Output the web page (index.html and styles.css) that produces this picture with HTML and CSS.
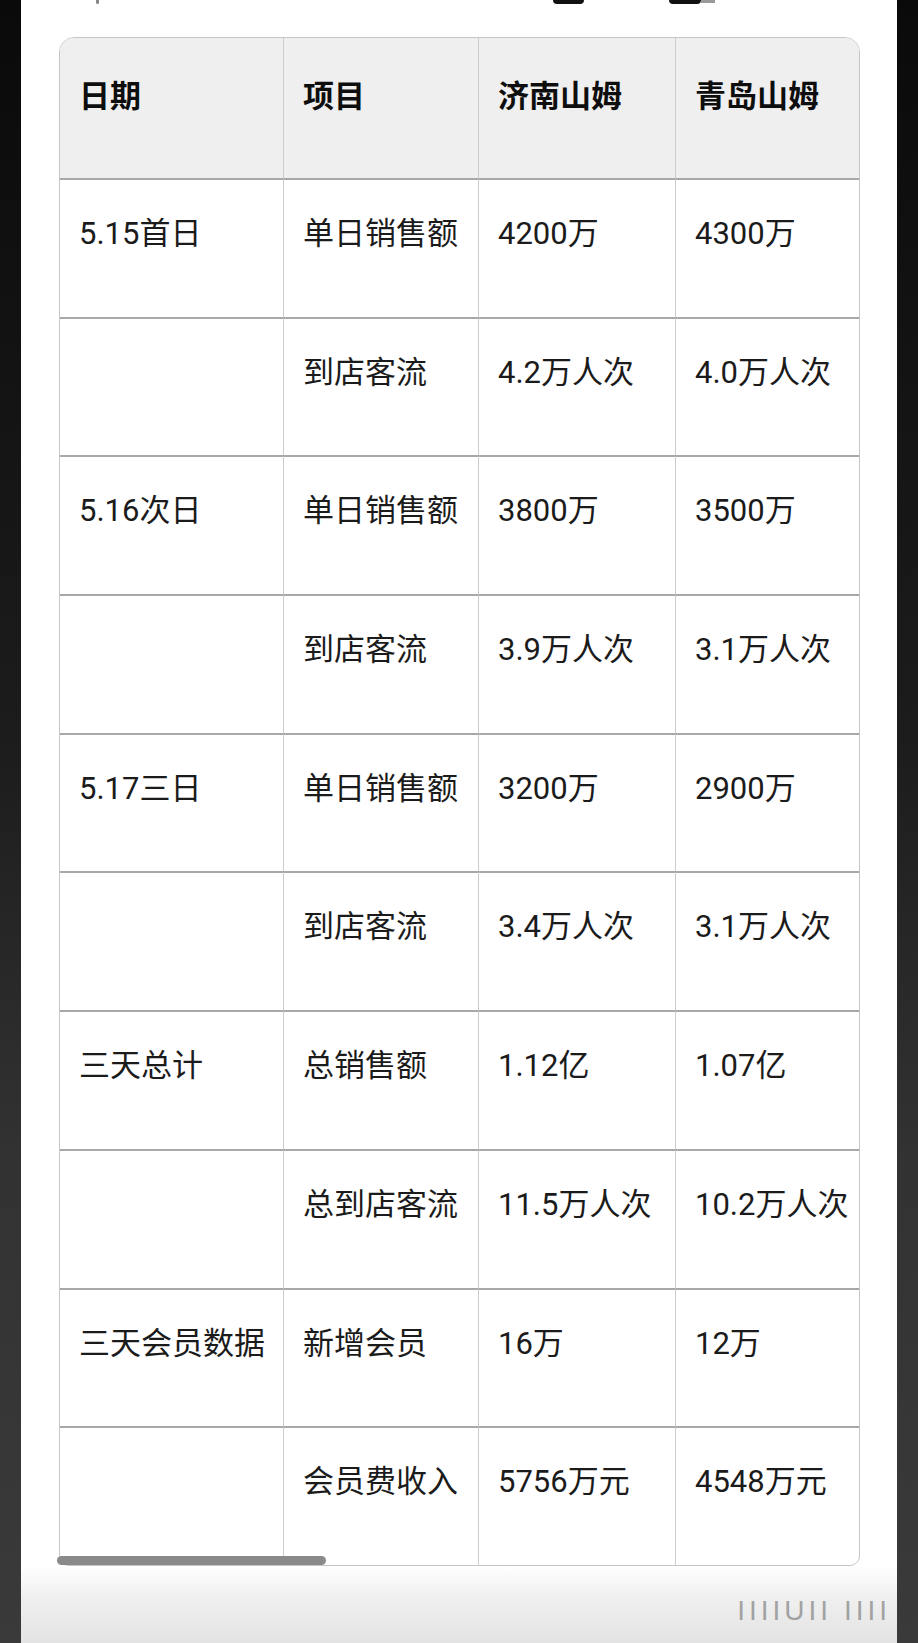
FILE: index.html
```html
<!DOCTYPE html>
<html lang="zh">
<head>
<meta charset="utf-8">
<title>山姆开业三天数据</title>
<link rel="stylesheet" href="styles.css">
</head>
<body>
<div class="side"></div>
<main class="main">
  <div class="topbar">
    <span class="mark mark-dot"></span>
    <span class="mark mark-a"></span>
    <span class="mark mark-b"></span>
    <span class="mark mark-c"></span>
  </div>
  <div class="table-wrap">
    <div class="table">
      <div class="cell head">日期</div>
      <div class="cell head">项目</div>
      <div class="cell head">济南山姆</div>
      <div class="cell head last">青岛山姆</div>

      <div class="cell">5.15首日</div>
      <div class="cell">单日销售额</div>
      <div class="cell">4200万</div>
      <div class="cell last">4300万</div>

      <div class="cell"></div>
      <div class="cell">到店客流</div>
      <div class="cell">4.2万人次</div>
      <div class="cell last">4.0万人次</div>

      <div class="cell">5.16次日</div>
      <div class="cell">单日销售额</div>
      <div class="cell">3800万</div>
      <div class="cell last">3500万</div>

      <div class="cell"></div>
      <div class="cell">到店客流</div>
      <div class="cell">3.9万人次</div>
      <div class="cell last">3.1万人次</div>

      <div class="cell">5.17三日</div>
      <div class="cell">单日销售额</div>
      <div class="cell">3200万</div>
      <div class="cell last">2900万</div>

      <div class="cell"></div>
      <div class="cell">到店客流</div>
      <div class="cell">3.4万人次</div>
      <div class="cell last">3.1万人次</div>

      <div class="cell">三天总计</div>
      <div class="cell">总销售额</div>
      <div class="cell">1.12亿</div>
      <div class="cell last">1.07亿</div>

      <div class="cell"></div>
      <div class="cell">总到店客流</div>
      <div class="cell">11.5万人次</div>
      <div class="cell last">10.2万人次</div>

      <div class="cell">三天会员数据</div>
      <div class="cell">新增会员</div>
      <div class="cell">16万</div>
      <div class="cell last">12万</div>

      <div class="cell"></div>
      <div class="cell">会员费收入</div>
      <div class="cell">5756万元</div>
      <div class="cell last">4548万元</div>
    </div>
    <div class="scrollbar"></div>
  </div>
  <div class="footer">
    <span class="watermark">IIIIUII IIII</span>
  </div>
</main>
<div class="side"></div>
</body>
</html>
```

FILE: styles.css
```css
html, body {
  margin: 0;
  padding: 0;
}

body {
  display: flex;
  width: 918px;
  height: 1643px;
  overflow: hidden;
  background: #ffffff;
  font-family: Roboto, "Noto Sans CJK SC", sans-serif;
  color: #1b1b1b;
}

.side {
  width: 21px;
  flex: none;
  background: linear-gradient(to bottom, #0a0a0a 0%, #1c1c1c 45%, #323232 70%, #3a3a3a 100%);
}

.main {
  width: 876px;
  flex: none;
  display: flex;
  flex-direction: column;
  background: #ffffff;
}

.topbar {
  height: 37px;
  flex: none;
  display: flex;
  align-items: flex-start;
}

.mark {
  display: block;
  height: 4px;
  background: #111;
  border-radius: 0 0 6px 6px;
}

.mark-dot {
  width: 3px;
  margin-left: 75px;
  background: #888;
}

.mark-a {
  width: 31px;
  margin-left: 454px;
}

.mark-b {
  width: 32px;
  margin-left: 85px;
}

.mark-c {
  width: 14px;
  height: 3px;
  background: #9a9a9a;
  border-radius: 0;
}

.table-wrap {
  position: relative;
  margin-left: 38px;
  width: 801px;
  flex: none;
}

.table {
  display: grid;
  grid-template-columns: 224px 195px 197px 183px;
  grid-template-rows: 140px repeat(10, 138.7px);
  border: 1px solid #c6c6c6;
  border-radius: 15px 15px 10px 10px;
  overflow: hidden;
  background: #ffffff;
}

.cell {
  box-sizing: border-box;
  padding: 32px 0 0 19px;
  font-size: 31px;
  line-height: 1.4;
  white-space: nowrap;
  border-right: 1px solid #cdcdcd;
  border-top: 2px solid #a8a8a8;
}

.cell.last {
  border-right: none;
}

.cell.head {
  background: #efefef;
  font-weight: 700;
  color: #0e0e0e;
  border-top: none;
  padding-top: 34px;
  font-family: "Noto Sans CJK SC", sans-serif;
}

.scrollbar {
  position: absolute;
  left: -2px;
  bottom: 1px;
  width: 269px;
  height: 9px;
  border-radius: 5px;
  background: #8a8a8a;
}

.footer {
  flex: 1;
  display: flex;
  justify-content: flex-end;
  align-items: flex-start;
  padding-top: 30px;
  padding-right: 6px;
  background: linear-gradient(to bottom, #ffffff 0%, #f0f0f0 40%, #e3e3e3 100%);
}

.watermark {
  font-family: "Liberation Sans", sans-serif;
  font-size: 28px;
  line-height: 30px;
  letter-spacing: 4px;
  color: #5a5a5a;
  opacity: 0.5;
  white-space: nowrap;
}
```
